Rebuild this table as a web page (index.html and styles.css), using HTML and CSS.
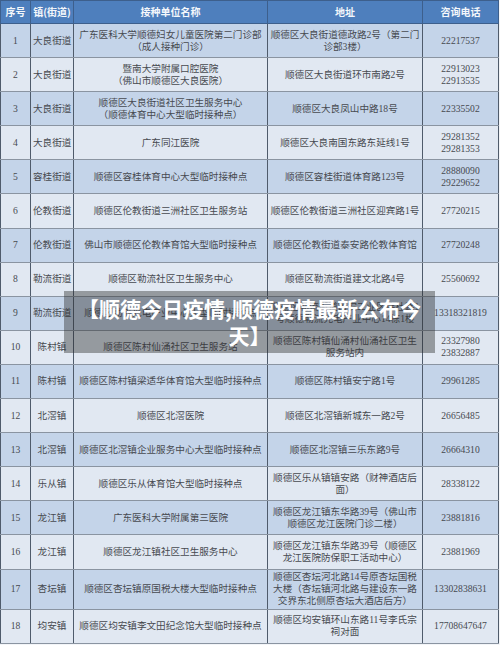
FILE: index.html
```html
<!DOCTYPE html>
<html lang="zh-CN">
<head>
<meta charset="utf-8">
<title>顺德疫苗接种点</title>
<link rel="stylesheet" href="styles.css">
</head>
<body>
<div class="page">
  <table class="sheet">
    <colgroup>
      <col class="c-no"><col class="c-town"><col class="c-name"><col class="c-addr"><col class="c-tel">
    </colgroup>
    <thead>
      <tr class="head">
        <th>序号</th><th>镇(街道)</th><th>接种单位名称</th><th>地址</th><th>咨询电话</th>
      </tr>
    </thead>
    <tbody>
      <tr class="odd"><td>1</td><td>大良街道</td><td>广东医科大学顺德妇女儿童医院第二门诊部<br>（成人接种门诊）</td><td>顺德区大良街道德政路2号（第二门<br>诊部3楼）</td><td>22217537</td></tr>
      <tr class="even"><td>2</td><td>大良街道</td><td>暨南大学附属口腔医院<br>（佛山市顺德区大良医院）</td><td>顺德区大良街道环市南路2号</td><td>22913023<br>22913535</td></tr>
      <tr class="odd"><td>3</td><td>大良街道</td><td>顺德区大良街道社区卫生服务中心<br>（顺德体育中心大型临时接种点）</td><td>顺德区大良凤山中路18号</td><td>22335502</td></tr>
      <tr class="even"><td>4</td><td>大良街道</td><td>广东同江医院</td><td>顺德区大良南国东路东延线1号</td><td>29281352<br>29281353</td></tr>
      <tr class="odd"><td>5</td><td>容桂街道</td><td>顺德区容桂体育中心大型临时接种点</td><td>顺德区容桂街道体育路123号</td><td>28880090<br>29229652</td></tr>
      <tr class="even"><td>6</td><td>伦教街道</td><td>顺德区伦教街道三洲社区卫生服务站</td><td>顺德区伦教街道三洲社区迎宾路1号</td><td>27720215</td></tr>
      <tr class="odd"><td>7</td><td>伦教街道</td><td>佛山市顺德区伦教体育馆大型临时接种点</td><td>顺德区伦教街道泰安路伦教体育馆</td><td>27720248</td></tr>
      <tr class="even"><td>8</td><td>勒流街道</td><td>顺德区勒流社区卫生服务中心</td><td>顺德区勒流街道建文北路4号</td><td>25560692</td></tr>
      <tr class="odd"><td>9</td><td>勒流街道</td><td>顺德区勒流光电产业中心大型临时接种点</td><td>顺德区勒流街道富安工业区连杜路1<br>号顺德勒流光电产业中心14栋1楼</td><td>13318321819</td></tr>
      <tr class="even"><td>10</td><td>陈村镇</td><td>顺德区陈村仙涌社区卫生服务站</td><td>顺德区陈村镇仙涌村仙涌社区卫生<br>服务站内</td><td>23327980<br>23832887</td></tr>
      <tr class="odd"><td>11</td><td>陈村镇</td><td>顺德区陈村镇梁适华体育馆大型临时接种点</td><td>顺德区陈村镇安宁路1号</td><td>29961285</td></tr>
      <tr class="even"><td>12</td><td>北滘镇</td><td>顺德区北滘医院</td><td>顺德区北滘镇新城东一路2号</td><td>26656485</td></tr>
      <tr class="odd"><td>13</td><td>北滘镇</td><td>顺德区北滘镇企业服务中心大型临时接种点</td><td>顺德区北滘镇三乐东路9号</td><td>26664310</td></tr>
      <tr class="even"><td>14</td><td>乐从镇</td><td>顺德区乐从体育馆大型临时接种点</td><td>顺德区乐从镇镇安路（财神酒店后<br>面）</td><td>28338122</td></tr>
      <tr class="odd"><td>15</td><td>龙江镇</td><td>广东医科大学附属第三医院</td><td>顺德区龙江镇东华路39号（佛山市<br>顺德区龙江医院门诊二楼）</td><td>23881816</td></tr>
      <tr class="even"><td>16</td><td>龙江镇</td><td>顺德区龙江镇社区卫生服务中心</td><td>顺德区龙江镇东华路39号（顺德区<br>龙江医院防保职工活动中心）</td><td>23881969</td></tr>
      <tr class="odd tall"><td>17</td><td>杏坛镇</td><td>顺德区杏坛镇原国税大楼大型临时接种点</td><td>顺德区杏坛河北路14号原杏坛国税<br>大楼（杏坛镇河北路与建设东一路<br>交界东北侧原杏坛大酒店后方）</td><td>13302838631</td></tr>
      <tr class="even"><td>18</td><td>均安镇</td><td>顺德区均安镇李文田纪念馆大型临时接种点</td><td>顺德区均安镇环山东路11号李氏宗<br>祠对面</td><td>17708647647</td></tr>
    </tbody>
  </table>
  <div class="banner">【顺德今日疫情,顺德疫情最新公布今天】</div>
</div>
</body>
</html>
```

FILE: styles.css
```css
html, body {
  margin: 0;
  padding: 0;
  background: #f3f5f8;
}
.page {
  position: relative;
  width: 500px;
  height: 645px;
  overflow: hidden;
}
.sheet {
  width: 498px;
  border-collapse: collapse;
  table-layout: fixed;
  font-family: "Liberation Serif", "Noto Sans CJK SC", serif;
  font-size: 9.6px;
  line-height: 12px;
  color: #474a50;
}
.c-no { width: 30px; }
.c-town { width: 43px; }
.c-name { width: 194px; }
.c-addr { width: 155px; }
.c-tel { width: 76px; }

.sheet th, .sheet td {
  padding: 0 2px;
  text-align: center;
  vertical-align: middle;
  white-space: nowrap;
  border-left: 1px solid #4f5b6b;
  border-right: 1px solid #4f5b6b;
  border-top: 1px solid #8a94a1;
  border-bottom: 1px solid #8a94a1;
}
.head {
  height: 23px;
  background: #4e7fbd;
}
.head th {
  font-family: "Noto Sans CJK SC", sans-serif;
  font-weight: 700;
  font-size: 10px;
  color: #f4f7fb;
  border-left-color: #3d5f8c;
  border-right-color: #3d5f8c;
  border-top-color: #3d5f8c;
  border-bottom-color: #3d5f8c;
}
.sheet tbody tr { height: 34.1px; }
.sheet tbody tr.tall { height: 40px; }
.odd { background: #c4d4e9; }
.even { background: #e1e8f2; }

.banner {
  position: absolute;
  left: 64px;
  top: 291px;
  width: 371px;
  box-sizing: border-box;
  padding: 4px 8px;
  background: rgba(45, 45, 45, 0.42);
  color: #ffffff;
  font-family: "Noto Sans CJK SC", sans-serif;
  font-weight: 700;
  font-size: 21px;
  line-height: 27px;
  text-align: center;
}
```
